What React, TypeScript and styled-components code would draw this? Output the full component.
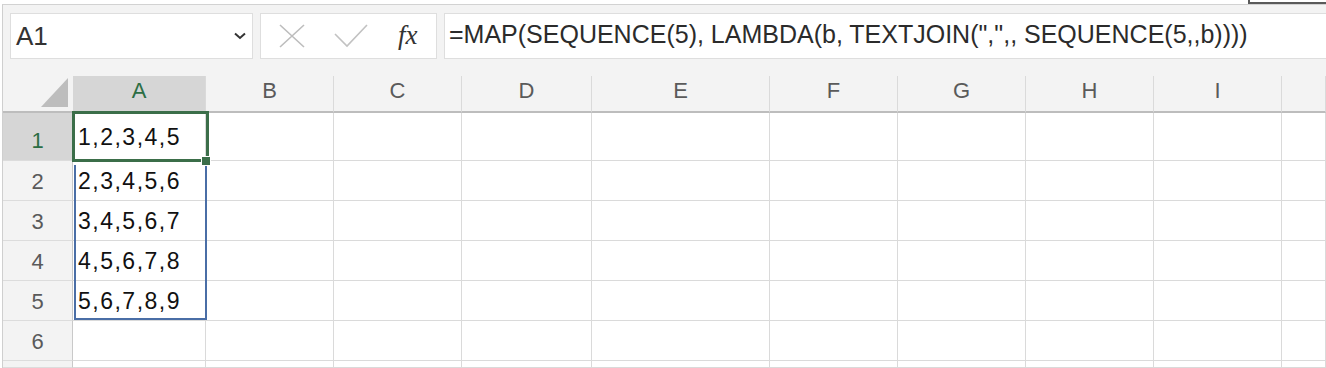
import React, { FC } from "react";
import styled, { createGlobalStyle } from "styled-components";

const GlobalStyle = createGlobalStyle`
    body {
        margin: 0;
        background: #ffffff;
        font-family: "Liberation Sans", Arial, sans-serif;
        overflow: hidden;
    }
    * {
        box-sizing: border-box;
    }
`;

const TopStrip = styled.div`
    height: 4px;
    display: flex;
    justify-content: flex-end;
`;

const TopBox = styled.div`
    width: 78px;
    height: 4px;
    border: 2px solid #5a5a5a;
    border-top: none;
    border-right: none;
`;

const Frame = styled.div`
    margin-left: 2px;
    border-top: 1px solid #d2d2d2;
    border-left: 1px solid #cfcfcf;
    background: #f3f3f3;
`;

const FormulaBar = styled.div`
    height: 71px;
    display: flex;
    align-items: flex-start;
    padding: 8px 0 0 7px;
    gap: 7px;
`;

const Box = styled.div<{ $width?: number }>`
    height: 46px;
    background: #ffffff;
    border: 1px solid #dedede;
    display: flex;
    align-items: center;
    ${(p) => (p.$width ? `width: ${p.$width}px;` : "flex: 1; border-right: none;")}
`;

const NameText = styled.span`
    flex: 1;
    padding-left: 5px;
    font-size: 26px;
    color: #333333;
`;

const Chevron = styled.svg`
    margin-right: 6px;
`;

const ButtonsRow = styled.div`
    display: flex;
    align-items: center;
    padding-left: 18px;
`;

const Fx = styled.span`
    font-family: "Liberation Serif", "Times New Roman", serif;
    font-style: italic;
    font-size: 27px;
    color: #333333;
    margin-left: 30px;
    margin-top: -2px;
`;

const FormulaText = styled.span`
    padding-left: 4px;
    margin-bottom: 4px;
    font-size: 25px;
    color: #2b2b2b;
    white-space: nowrap;
`;

const SheetWrap = styled.div`
    position: relative;
`;

const Sheet = styled.div`
    display: grid;
    grid-template-columns: 70px 133px 128px 128px 130px 178px 128px 128px 128px 128px 1fr;
    grid-template-rows: 37px 48px repeat(5, 40px) 7px;
`;

const Corner = styled.div`
    border-bottom: 2px solid #bdbdbd;
    display: flex;
    align-items: flex-end;
    justify-content: flex-end;
    padding: 0 5px 4px 0;
`;

const ColHead = styled.div<{ $active?: boolean }>`
    background: ${(p) => (p.$active ? "#d6d6d6" : "#f3f3f3")};
    color: ${(p) => (p.$active ? "#2c6e45" : "#5a5a5a")};
    border-right: 1px solid #dadada;
    border-bottom: 2px solid #bdbdbd;
    font-size: 22px;
    display: flex;
    align-items: center;
    justify-content: center;
    padding-bottom: 5px;
`;

const RowHead = styled.div<{ $active?: boolean; $tall?: boolean }>`
    background: ${(p) => (p.$active ? "#d6d6d6" : "#f3f3f3")};
    color: ${(p) => (p.$active ? "#2c6e45" : "#5a5a5a")};
    border-right: 1px solid #c9c9c9;
    border-bottom: 1px solid #dcdcdc;
    font-size: 22px;
    display: flex;
    align-items: center;
    justify-content: center;
    padding-top: ${(p) => (p.$tall ? "9px" : "3px")};
`;

const Cell = styled.div`
    background: #ffffff;
    border-right: 1px solid #dadada;
    border-bottom: 1px solid #dadada;
    font-size: 23px;
    letter-spacing: 1.5px;
    color: #111111;
    display: flex;
    align-items: center;
    padding: 2px 0 0 5px;
    white-space: nowrap;
`;

const Selection = styled.div`
    position: absolute;
    left: 69px;
    top: 35px;
    width: 137px;
    height: 51px;
    border: 3px solid #3b6e49;
    pointer-events: none;
`;

const FillHandle = styled.div`
    position: absolute;
    left: 199px;
    top: 81px;
    width: 8px;
    height: 8px;
    background: #3b6e49;
    outline: 1px solid #ffffff;
`;

const Spill = styled.div`
    position: absolute;
    left: 71px;
    top: 89px;
    width: 133px;
    height: 155px;
    border: 2px solid #4a6ea6;
    border-top: none;
    pointer-events: none;
`;

const columns = [
    { label: "A", active: true },
    { label: "B" },
    { label: "C" },
    { label: "D" },
    { label: "E" },
    { label: "F" },
    { label: "G" },
    { label: "H" },
    { label: "I" },
    { label: "" },
];

const values = ["1,2,3,4,5", "2,3,4,5,6", "3,4,5,6,7", "4,5,6,7,8", "5,6,7,8,9", "", ""];

const App: FC = () => {
    return (
        <>
            <GlobalStyle />
            <TopStrip>
                <TopBox />
            </TopStrip>
            <Frame>
                <FormulaBar>
                    <Box $width={243}>
                        <NameText>A1</NameText>
                        <Chevron width="12" height="8" viewBox="0 0 12 8">
                            <path d="M1 1.5 L6 6 L11 1.5" fill="none" stroke="#333" strokeWidth="2" />
                        </Chevron>
                    </Box>
                    <Box $width={177}>
                        <ButtonsRow>
                            <svg width="26" height="24" viewBox="0 0 26 24">
                                <path d="M1 1 L25 23 M25 1 L1 23" stroke="#bdbdbd" strokeWidth="1.6" fill="none" />
                            </svg>
                            <svg width="34" height="24" viewBox="0 0 34 24" style={{ marginLeft: 29 }}>
                                <path d="M1 10 L13 22 L33 1" stroke="#c2c2c2" strokeWidth="1.6" fill="none" />
                            </svg>
                            <Fx>fx</Fx>
                        </ButtonsRow>
                    </Box>
                    <Box>
                        <FormulaText>=MAP(SEQUENCE(5), LAMBDA(b, TEXTJOIN(",",, SEQUENCE(5,,b))))</FormulaText>
                    </Box>
                </FormulaBar>
                <SheetWrap>
                    <Sheet>
                        <Corner>
                            <svg width="27" height="29" viewBox="0 0 27 29">
                                <polygon points="0,29 27,29 27,0" fill="#bdbdbd" />
                            </svg>
                        </Corner>
                        {columns.map((c, i) => (
                            <ColHead key={i} $active={c.active}>
                                {c.label}
                            </ColHead>
                        ))}
                        {values.map((v, r) => (
                            <React.Fragment key={r}>
                                <RowHead $active={r === 0} $tall={r === 0}>
                                    {r < 6 ? r + 1 : ""}
                                </RowHead>
                                <Cell>{v}</Cell>
                                {columns.slice(1).map((c, i) => (
                                    <Cell key={i} />
                                ))}
                            </React.Fragment>
                        ))}
                    </Sheet>
                    <Spill />
                    <Selection />
                    <FillHandle />
                </SheetWrap>
            </Frame>
        </>
    );
};

export default App;
